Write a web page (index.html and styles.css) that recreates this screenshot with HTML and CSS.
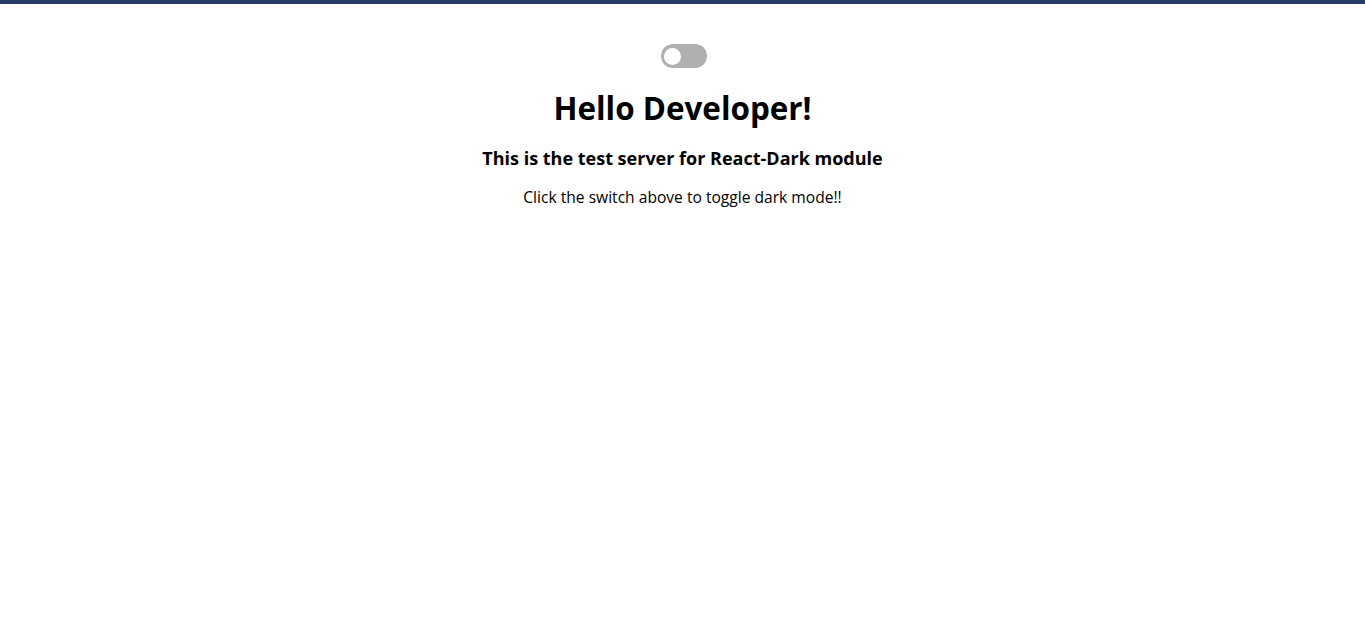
FILE: index.html
```html
<!DOCTYPE html>
<html lang="en">
<head>
<meta charset="utf-8">
<title>React-Dark test</title>
<link rel="stylesheet" href="styles.css">
</head>
<body>
<div class="topbar"></div>
<main class="app">
  <label class="switch">
    <span class="knob"></span>
  </label>
  <h1 class="title">Hello Developer!</h1>
  <h3 class="subtitle">This is the test server for React-Dark module</h3>
  <p class="hint">Click the switch above to toggle dark mode!!</p>
</main>
</body>
</html>
```
FILE: styles.css
```css
html, body {
  margin: 0;
  padding: 0;
  background: #ffffff;
}
body {
  font-family: "Open Sans", "Noto Sans", sans-serif;
  color: #000000;
}
.topbar {
  height: 4px;
  background: #293966;
}
.app {
  display: flex;
  flex-direction: column;
  align-items: center;
  text-align: center;
  padding-top: 40px;
}
.switch {
  display: flex;
  align-items: center;
  width: 46px;
  height: 24px;
  margin-left: 2px;
  border-radius: 12px;
  background: #b0b0b0;
  box-sizing: border-box;
  padding-left: 3px;
}
.knob {
  width: 17px;
  height: 17px;
  border-radius: 50%;
  background: #ffffff;
}
.title {
  margin: 21px 0 0;
  font-size: 31.4px;
  line-height: 37px;
  font-weight: 700;
}
.subtitle {
  margin: 21px 0 0;
  font-size: 18px;
  line-height: 22px;
  font-weight: 700;
}
.hint {
  margin: 19px 0 0;
  font-size: 15.6px;
  line-height: 19px;
}
```
